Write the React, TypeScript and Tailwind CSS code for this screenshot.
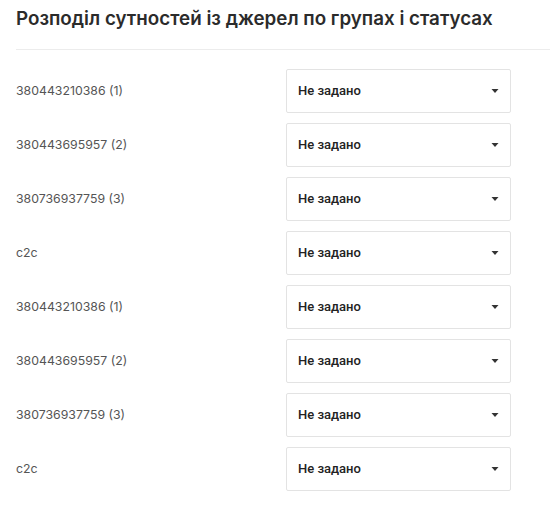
import React from "react";

const rows = [
  "380443210386 (1)",
  "380443695957 (2)",
  "380736937759 (3)",
  "c2c",
  "380443210386 (1)",
  "380443695957 (2)",
  "380736937759 (3)",
  "c2c",
];

export default function App() {
  return (
    <div className="w-[550px] h-[520px] bg-white pl-4" style={{ fontFamily: "Inter, 'Noto Sans', sans-serif" }}>
      <div className="pt-[7px] h-[50px] border-b border-[#ececec]">
        <h1 className="text-[18.8px] leading-[24px] font-semibold text-[#2b2b2b]">
          Розподіл сутностей із джерел по групах і статусах
        </h1>
      </div>
      <div className="pt-[19px] flex flex-col gap-[10px]">
        {rows.map((r, i) => (
          <div key={i} className="flex items-center h-[44px]">
            <div className="w-[270px] text-[12.3px] text-[#555]">{r}</div>
            <div className="w-[225px] h-[44px] border border-[#e3e3e3] rounded-[2px] flex items-center justify-between pl-[11px] pr-[11px]">
              <span className="text-[13px] font-medium text-[#222]" style={{ fontFamily: "Roboto, 'Liberation Sans', sans-serif" }}>
                Не задано
              </span>
              <svg width="8" height="4" viewBox="0 0 8 4">
                <path d="M0.5 0 L7.5 0 L4 4 Z" fill="#333" />
              </svg>
            </div>
          </div>
        ))}
      </div>
    </div>
  );
}
